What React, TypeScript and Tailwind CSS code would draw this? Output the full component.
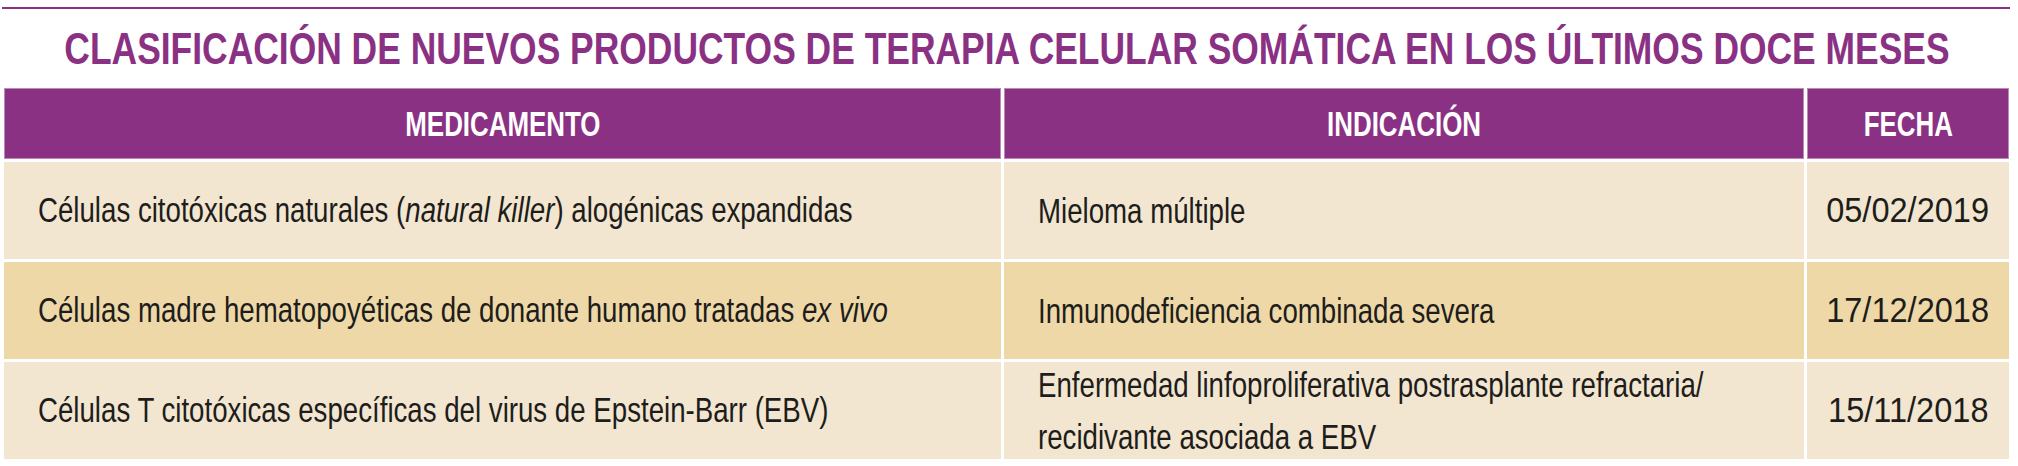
import React from "react";

// no condensed family is installed, so the narrow faces are squeezed from Liberation Sans
const fuente = "font-['Liberation_Sans',Arial,sans-serif]";

interface Fila {
    medicamento: React.ReactNode;
    indicacion: React.ReactNode;
    fecha: string;
    oscura?: boolean;
}

const filas: Fila[] = [
    {
        medicamento: (
            <>
                Células citotóxicas naturales (<i>natural killer</i>) alogénicas expandidas
            </>
        ),
        indicacion: "Mieloma múltiple",
        fecha: "05/02/2019",
    },
    {
        medicamento: (
            <>
                Células madre hematopoyéticas de donante humano tratadas <i>ex vivo</i>
            </>
        ),
        indicacion: "Inmunodeficiencia combinada severa",
        fecha: "17/12/2018",
        oscura: true,
    },
    {
        medicamento: "Células T citotóxicas específicas del virus de Epstein-Barr (EBV)",
        indicacion: (
            <>
                Enfermedad linfoproliferativa postrasplante refractaria/
                <br />
                recidivante asociada a EBV
            </>
        ),
        fecha: "15/11/2018",
    },
];

const Encabezado = ({ children }: { children: React.ReactNode }) => (
    <div className="flex h-[71px] items-center justify-center border border-[#b98bb5] bg-[#8a3184] text-white">
        <span className="shrink-0 origin-center scale-x-[0.74] whitespace-nowrap text-[35px] font-bold leading-none">
            {children}
        </span>
    </div>
);

export default function App() {
    return (
        <div className={`${fuente} w-[2018px] h-[466px] overflow-hidden bg-white`}>
            <div className="mx-[2px] mt-[7px] h-[2px] w-[2008px] bg-[#8a3184]" />
            <div className="flex h-[79px] items-center justify-center pl-[4px] pr-[9px]">
                <h1 className="shrink-0 origin-center scale-x-[0.805] whitespace-nowrap text-[44px] font-bold leading-none text-[#8a3184]">
                    CLASIFICACIÓN DE NUEVOS PRODUCTOS DE TERAPIA CELULAR SOMÁTICA EN LOS ÚLTIMOS DOCE MESES
                </h1>
            </div>

            <div className="ml-[4px] grid w-[2005px] grid-cols-[997px_800px_202px] gap-[3px]">
                <Encabezado>MEDICAMENTO</Encabezado>
                <Encabezado>INDICACIÓN</Encabezado>
                <Encabezado>FECHA</Encabezado>

                {filas.map((fila, i) => {
                    const fondo = fila.oscura ? "bg-[#efd8a7]" : "bg-[#f3e6d1]";
                    return (
                        <React.Fragment key={i}>
                            <div className={`${fondo} flex h-[97px] items-center pl-[34px] text-[35px] text-[#1d1d1b]`}>
                                <span className="shrink-0 origin-left scale-x-[0.79] whitespace-nowrap">
                                    {fila.medicamento}
                                </span>
                            </div>
                            <div className={`${fondo} flex h-[97px] items-center pl-[34px] text-[35px] leading-[52px] text-[#1d1d1b]`}>
                                <span className="shrink-0 origin-left scale-x-[0.79] whitespace-nowrap">
                                    {fila.indicacion}
                                </span>
                            </div>
                            <div className={`${fondo} flex h-[97px] items-center justify-center text-[35px] text-[#1d1d1b]`}>
                                <span className="shrink-0 origin-center scale-x-[0.93] whitespace-nowrap">{fila.fecha}</span>
                            </div>
                        </React.Fragment>
                    );
                })}
            </div>
        </div>
    );
}
